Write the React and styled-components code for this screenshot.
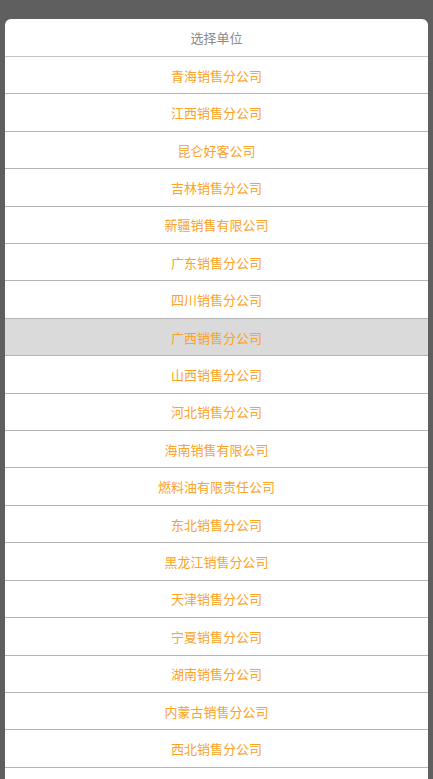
import React, { useState } from 'react';
import styled, { createGlobalStyle } from 'styled-components';

const GlobalStyle = createGlobalStyle`
	html, body {
		margin: 0;
		padding: 0;
		background: #5f5f5f;
		height: 100%;
		overflow: hidden;
	}
	body {
		font-family: "Noto Sans CJK SC", "Noto Sans", sans-serif;
	}
`;

const Mask = styled.div`
	width: 433px;
	height: 779px;
	background: #5f5f5f;
	padding: 19px 5px 0;
	box-sizing: border-box;
	overflow: hidden;
	display: flex;
	flex-direction: column;
`;

const Sheet = styled.div`
	flex: 1;
	background: #fff;
	border-radius: 6px 6px 0 0;
	overflow: hidden;
	display: flex;
	flex-direction: column;
`;

const Title = styled.div`
	height: 38px;
	flex-shrink: 0;
	box-sizing: border-box;
	display: flex;
	align-items: center;
	justify-content: center;
	font-size: 13px;
	color: #8a8a8a;
	border-bottom: 1px solid #c4c4c4;
	padding-bottom: 1px;
`;

const Option = styled.div`
	height: 37.42px;
	flex-shrink: 0;
	box-sizing: border-box;
	display: flex;
	align-items: center;
	justify-content: center;
	font-size: 13px;
	color: #fca226;
	background: ${props => (props.$active ? '#dadada' : '#fff')};
	border-bottom: 1px solid #b4b4b4;
	cursor: pointer;
`;

const units = [
	'青海销售分公司',
	'江西销售分公司',
	'昆仑好客公司',
	'吉林销售分公司',
	'新疆销售有限公司',
	'广东销售分公司',
	'四川销售分公司',
	'广西销售分公司',
	'山西销售分公司',
	'河北销售分公司',
	'海南销售有限公司',
	'燃料油有限责任公司',
	'东北销售分公司',
	'黑龙江销售分公司',
	'天津销售分公司',
	'宁夏销售分公司',
	'湖南销售分公司',
	'内蒙古销售分公司',
	'西北销售分公司',
];

function App() {
	const [active, setActive] = useState(7);

	return (
		<Mask>
			<GlobalStyle />
			<Sheet>
				<Title>选择单位</Title>
				{units.map((name, i) => (
					<Option key={name} $active={i === active} onClick={() => setActive(i)}>
						{name}
					</Option>
				))}
			</Sheet>
		</Mask>
	);
}

export default App;
